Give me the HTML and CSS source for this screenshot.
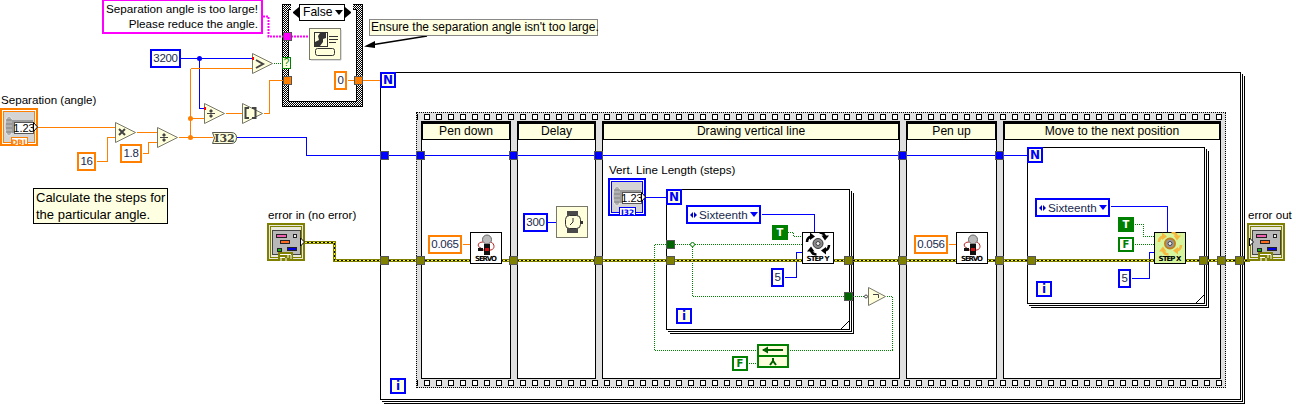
FILE: index.html
```html
<!DOCTYPE html>
<html lang="en">
<head>
    <meta charset="UTF-8">
    <meta name="viewport" content="width=device-width, initial-scale=1.0">
    <title>Block diagram</title>
    <link rel="stylesheet" href="styles.css">
</head>
<body>
<div class="canvas">

    <!-- structures, back to front -->
    <div class="loop loop-outer"></div>
    <div class="sequence">
        <svg class="film" width="808" height="8"><rect width="808" height="8" fill="url(#holes)"/></svg>
        <div class="frames">
            <div class="frame frame-1"><div class="frame-title">Pen down</div></div>
            <div class="frame frame-2"><div class="frame-title">Delay</div></div>
            <div class="frame frame-3"><div class="frame-title">Drawing vertical line</div></div>
            <div class="frame frame-4"><div class="frame-title">Pen up</div></div>
            <div class="frame frame-5"><div class="frame-title">Move to the next position</div></div>
        </div>
        <svg class="film" width="808" height="8"><rect width="808" height="8" fill="url(#holes)"/></svg>
    </div>
    <div class="loop loop-vert"></div>
    <div class="loop loop-move"></div>
    <div class="case-frame"><div class="case-body"></div></div>

    <!-- wires and icons -->
    <svg class="wires" width="1296" height="404">
        <defs>
            <pattern id="holes" x="2" width="12" height="8" patternUnits="userSpaceOnUse">
                <rect x="5.5" y="1.5" width="5" height="5" fill="#fff" stroke="#000"/>
            </pattern>
            <symbol id="tri" viewBox="0 0 21 21">
                <polygon points="0.5,0.5 20.5,10.5 0.5,20.5" fill="#ffffdc" stroke="#77776a"/>
            </symbol>
            <symbol id="servo" viewBox="0 0 32 32">
                <rect x="0.5" y="0.5" width="31" height="31" fill="#fff" stroke="#000"/>
                <circle cx="17" cy="7.500" r="4.500" fill="#bbb" stroke="#666"/>
                <path d="M13 10 C7 10 7 15 11 16 M21 10 C25 12 25 17 21 18 M11 18 H21" fill="none" stroke="#c02020"/>
                <rect x="14" y="12" width="6" height="11" fill="#111"/>
                <rect x="15" y="16" width="4" height="3" fill="#d01010"/>
                <rect x="8" y="16" width="5" height="3" fill="#111"/>
                <text x="16" y="29" class="icon-text" textLength="22">SERVO</text>
            </symbol>
            <symbol id="rotor" viewBox="0 0 32 24">
                <g id="rotor-arrow">
                    <path d="M5 10 C5 7 6 5.500 9 4.500" fill="none" stroke="currentColor" stroke-width="2.500"/>
                    <polygon points="8,0.500 13,4.500 8,8" fill="currentColor"/>
                </g>
                <use href="#rotor-arrow" transform="rotate(90 16 11.500)"/>
                <use href="#rotor-arrow" transform="rotate(180 16 11.500)"/>
                <use href="#rotor-arrow" transform="rotate(270 16 11.500)"/>
            </symbol>
            <symbol id="error" viewBox="0 0 38 38">
                <rect x="1" y="1" width="36" height="36" fill="#e8e8dc" stroke="#808000" stroke-width="2"/>
                <rect x="3.500" y="3.500" width="31" height="31" fill="#e8e8dc" stroke="#808000"/>
                <rect x="5.500" y="7.500" width="28" height="24" fill="#b8b8b8" stroke="#444"/>
                <rect x="9.500" y="11.500" width="10" height="3" fill="#f060b0" stroke="#222"/>
                <rect x="26.500" y="11.500" width="3" height="3" fill="#eee" stroke="#222"/>
                <rect x="13.500" y="17.500" width="9" height="3" fill="#ff6a20" stroke="#222"/>
                <rect x="10.500" y="25.500" width="4" height="3" fill="#10b010" stroke="#222"/>
                <rect x="20.500" y="24.500" width="9" height="3" fill="#0000e0" stroke="#222"/>
                <rect x="11" y="29" width="15" height="9" fill="#808000"/>
                <path d="M13 31.500 H24 M13 34.500 H18 M21 31 V35 M14 35 V38 M19 35 V38 M24 32 V36" stroke="#fff" fill="none"/>
            </symbol>
            <symbol id="numeric" viewBox="0 0 38 38">
                <rect x="1" y="1" width="36" height="36" fill="#d4d4d4" stroke="currentColor" stroke-width="2"/>
                <rect x="2.500" y="2.500" width="33" height="33" fill="none" stroke="#fff"/>
                <rect x="3.500" y="3.500" width="31" height="31" fill="#d4d4d4" stroke="currentColor"/>
                <ellipse cx="9" cy="18" rx="4" ry="10" fill="#b0b0b0" stroke="#e8e8e8"/>
                <path d="M6 12 H12 M6 16 H12 M6 20 H12 M6 24 H12" stroke="#808080"/>
                <rect x="12" y="12" width="21" height="13" fill="#9a9a9a"/>
                <rect x="14.500" y="14.500" width="19" height="11" fill="#fff" stroke="#555"/>
                <rect x="11.500" y="29.500" width="16" height="8" fill="#fff" stroke="currentColor"/>
            </symbol>
            <symbol id="corner" viewBox="0 0 10 10">
                <polygon points="0.500,9.500 9.500,0.500 9.500,9.500" fill="#fff"/>
                <path d="M0.500 9.500 L9.500 0.500 M0.500 9.500 H10 M9.500 0.500 V10" stroke="#000" fill="none"/>
            </symbol>
        </defs>

        <g class="crisp" transform="translate(.5 .5)">
            <!-- blue -->
            <path class="wire-blue" d="M180 58 H252 M199 58 V108 H204"/>
            <path class="wire-blue" d="M236 137 H306 V155 H1027"/>
            <path class="wire-blue" d="M645 197 H666 M761 214 H814 V232 M784 277 H796 V252 H802"/>
            <path class="wire-blue" d="M547 222 H556 M1110 206 H1167 V232 M1131 278 H1149 V252 H1154"/>
            <!-- orange -->
            <path class="wire-orange" d="M37 127 H115 M96 161 H107 V137 H115 M136 132 H157 M142 153 H148 V142 H157"/>
            <path class="wire-orange" d="M178 137 H212 M190 68 H252 M190 68 V137 M190 118 H204 M225 113 H242 M263 113 H269 V80 H283"/>
            <path class="wire-orange" d="M347 80 H380 M462 244 H470 M948 244 H956"/>
            <!-- boolean -->
            <path class="wire-green" d="M273 63 H282 M787 232 H793 V236 H802 M654 244 H802 M692 244 V296 H866"/>
            <path class="wire-green" d="M654 244 V350 H757 M789 350 H892 V296 H885 M748 363 H757"/>
            <path class="wire-green" d="M1134 224 H1143 V236 H1154 M1134 244 H1154"/>
        </g>
        <!-- string -->
        <path class="wire-pink" d="M263 16.500 H268.500 V36.500 H309"/>
        <!-- error cluster -->
        <path class="wire-error-base" d="M303 242.500 H334.500 V260.500 H1250"/>
        <path class="wire-error" d="M303 242.500 H334.500 V260.500 H1250"/>
        <path class="wire-error-dash" d="M303 242.500 H334.500 V260.500 H1250"/>
        <path class="note-arrow" d="M374 44.500 L427 36"/>
        <polygon points="364,46.500 375,41 375,48" fill="#000"/>

        <!-- primitives -->
        <use href="#tri" x="252" y="53" width="21" height="21"/>
        <use href="#tri" x="115" y="122" width="21" height="21"/>
        <use href="#tri" x="157" y="127" width="21" height="21"/>
        <use href="#tri" x="204" y="103" width="21" height="21"/>
        <use href="#tri" x="242" y="103" width="21" height="21"/>
        <polygon points="868.500,287.500 885.500,296.500 868.500,305.500" fill="#ffffdc" stroke="#77776a"/>
        <circle cx="866" cy="296.500" r="1.500" fill="#fff" stroke="#444"/>
        <g class="glyphs">
            <path d="M256 60 L263 64 L256 68" fill="none" stroke-width="2"/>
            <path d="M119 129 L125 135 M125 129 L119 135" fill="none" stroke-width="2"/>
            <path d="M160 137.500 H168 M163 134 h2 v2 h-2z M163 139 h2 v2 h-2z" fill="#444"/>
            <path d="M207 113.500 H215 M210 110 h2 v2 h-2z M210 115 h2 v2 h-2z" fill="#444"/>
            <path d="M249 108 H245.500 V118 H249 M252 108 H255.500 V118 H252" fill="none" stroke-width="2"/>
            <path d="M873 294.500 H878.500 V298" fill="none"/>
        </g>
        <path class="red" d="M252 57 h2 v3 h-2z M204 107 h2 v3 h-2z M380 79 h2 v3 h-2z"/>

        <!-- conversion -->
        <path d="M212.500 132.500 H231 Q236.500 132.500 236.500 137.500 Q236.500 143.500 231 143.500 H212.500 L214.500 138 Z" fill="#ffffdc" stroke="#55554a"/>
        <text x="224.500" y="142" class="i32">I32</text>

        <!-- message dialog -->
        <rect x="309.500" y="28.500" width="31" height="31" fill="#ffffdc" stroke="#77776a"/>
        <path d="M341 30 V60 H311" stroke="#bbb" fill="none"/>
        <rect x="314.500" y="32.500" width="13" height="14" fill="#ffffdc" stroke="#333"/>
        <path d="M320 33 h6 v5 l-3 1 v3 l-3 4 h-5 v-4 l4 -2 l-1 -4z" fill="#333"/>
        <path d="M329 36.500 H338 M329 39.500 H338 M329 42.500 H336" stroke="#333"/>
        <rect x="315.500" y="48.500" width="19" height="7" rx="2" fill="#ffffdc" stroke="#333"/>

        <!-- watch -->
        <rect x="556.500" y="206.500" width="31" height="31" fill="#ffffdc" stroke="#77776a"/>
        <path d="M567 211 h11 v5 h-11z M567 228 h11 v5 h-11z" fill="#4a4a4a"/>
        <rect x="565.500" y="215.500" width="15" height="13" rx="4" fill="#ffffdc" stroke="#333"/>
        <path d="M573 218 V222 L570 225" stroke="#333" fill="none"/>
        <path d="M581 221 h2 v3 h-2z" fill="#333"/>

        <!-- controls -->
        <use href="#numeric" x="0" y="108" width="38" height="38" class="ctl-orange"/>
        <use href="#numeric" x="608" y="178" width="38" height="38" class="ctl-blue"/>
        <text x="24" y="131.500" class="digits">1.23</text>
        <text x="632" y="201.500" class="digits">1.23</text>
        <text x="19.500" y="144.500" class="tab-text tab-orange">DBL</text>
        <text x="627.500" y="214.500" class="tab-text tab-blue">I32</text>
        <polygon points="33.500,122.500 37.500,127 33.500,131.500" fill="#fff" stroke="#000"/>
        <polygon points="641.500,192.500 645.500,197 641.500,201.500" fill="#fff" stroke="#000"/>
        <use href="#error" x="267" y="223" width="38" height="38"/>
        <polygon points="300.500,238 304.500,242 300.500,246" fill="#fff" stroke="#000"/>
        <use href="#error" x="1247" y="223" width="38" height="38"/>
        <polygon points="1249.500,238 1253.500,242 1249.500,246" fill="#fff" stroke="#000"/>

        <!-- sub VIs -->
        <use href="#servo" x="470" y="232" width="32" height="32"/>
        <use href="#servo" x="956" y="232" width="32" height="32"/>
        <rect x="802.500" y="232.500" width="31" height="31" fill="#fff" stroke="#000"/>
        <use href="#rotor" x="802" y="232" width="32" height="24" class="rotor-black"/>
        <circle cx="818" cy="243.500" r="5" fill="#8a8a8a" stroke="#333"/>
        <circle cx="818" cy="243.500" r="2" fill="#eee" stroke="#444"/>
        <text x="818" y="261" class="icon-text" textLength="23">STEP Y</text>
        <rect x="1154.500" y="232.500" width="31" height="31" fill="#d6f59c" stroke="#000"/>
        <use href="#rotor" x="1154" y="232" width="32" height="24" class="rotor-orange"/>
        <circle cx="1170" cy="243.500" r="5" fill="#999" stroke="#c08020" stroke-width="2"/>
        <circle cx="1170" cy="243.500" r="2" fill="#eee" stroke="#444"/>
        <text x="1170" y="261" class="icon-text" textLength="23">STEP X</text>

        <!-- feedback node -->
        <rect x="758" y="345" width="30" height="22" fill="#ffffdc" stroke="#008000" stroke-width="2"/>
        <path d="M758 356 H788" stroke="#008000" stroke-width="2"/>
        <path d="M763 350 H783" stroke="#006000" stroke-width="2"/>
        <polygon points="762,350 768,346.500 768,353.500" fill="#006000"/>
        <path d="M773 358 V361 M770 365 L773 361 L776 365" stroke="#006000" stroke-width="2" fill="none"/>

        <!-- tunnels -->
        <g class="tunnels">
            <rect class="t-pink" x="283.500" y="32.500" width="8" height="8"/>
            <rect class="t-orange" x="283.500" y="76.500" width="8" height="8"/>
            <rect class="t-orange" x="354.500" y="76.500" width="8" height="8"/>
            <rect class="t-blue" x="380.500" y="151.500" width="8" height="8"/>
            <rect class="t-blue" x="416.500" y="151.500" width="8" height="8"/>
            <rect class="t-blue" x="509.500" y="151.500" width="8" height="8"/>
            <rect class="t-blue" x="594.500" y="151.500" width="8" height="8"/>
            <rect class="t-blue" x="898.500" y="151.500" width="8" height="8"/>
            <rect class="t-blue" x="995.500" y="151.500" width="8" height="8"/>
            <rect class="t-err" x="380.500" y="256.500" width="8" height="8"/>
            <rect class="t-err" x="416.500" y="256.500" width="8" height="8"/>
            <rect class="t-err" x="509.500" y="256.500" width="8" height="8"/>
            <rect class="t-err" x="594.500" y="256.500" width="8" height="8"/>
            <rect class="t-err" x="666.500" y="256.500" width="8" height="8"/>
            <rect class="t-err" x="844.500" y="256.500" width="8" height="8"/>
            <rect class="t-err" x="898.500" y="256.500" width="8" height="8"/>
            <rect class="t-err" x="995.500" y="256.500" width="8" height="8"/>
            <rect class="t-err" x="1027.500" y="256.500" width="8" height="8"/>
            <rect class="t-err" x="1199.500" y="256.500" width="8" height="8"/>
            <rect class="t-err" x="1217.500" y="256.500" width="8" height="8"/>
            <rect class="t-err" x="1235.500" y="256.500" width="8" height="8"/>
            <rect class="t-green" x="666.500" y="240.500" width="8" height="8"/>
            <rect class="t-green" x="844.500" y="292.500" width="8" height="8"/>
        </g>
        <circle cx="199.500" cy="58.500" r="2.500" fill="#0000ff"/>
        <circle cx="190.500" cy="118.500" r="2.500" fill="#ff8000"/>
        <circle cx="190.500" cy="137.500" r="2.500" fill="#ff8000"/>
        <circle cx="692.500" cy="244.500" r="2" fill="#fff" stroke="#008000"/>

        <use href="#corner" x="840" y="320" width="10" height="10"/>
        <use href="#corner" x="1195" y="294" width="10" height="10"/>
    </svg>

    <!-- text nodes -->
    <div class="string-const">Separation angle is too large!<br>Please reduce the angle.</div>
    <div class="case-selector">
        <span class="sel-left"></span>
        <span class="sel-name">False<span class="sel-drop"></span></span>
        <span class="sel-right"></span>
    </div>
    <div class="select-term">?</div>
    <div class="note note-ensure">Ensure the separation angle isn't too large.</div>
    <div class="note note-calc">Calculate the steps for<br>the particular angle.</div>

    <div class="label label-separation">Separation (angle)</div>
    <div class="label label-errin">error in (no error)</div>
    <div class="label label-errout">error out</div>
    <div class="label label-length">Vert. Line Length (steps)</div>

    <div class="const orange c-16">16</div>
    <div class="const orange c-18">1.8</div>
    <div class="const orange c-0">0</div>
    <div class="const orange c-065">0.065</div>
    <div class="const orange c-056">0.056</div>
    <div class="const blue c-3200">3200</div>
    <div class="const blue c-300">300</div>
    <div class="const blue c-5a">5</div>
    <div class="const blue c-5b">5</div>

    <div class="enum enum-vert"><span class="enum-arrows"></span><span>Sixteenth</span><span class="enum-drop"></span></div>
    <div class="enum enum-move"><span class="enum-arrows"></span><span>Sixteenth</span><span class="enum-drop"></span></div>

    <div class="bool bool-on b-t1">T</div>
    <div class="bool bool-on b-t2">T</div>
    <div class="bool bool-off b-f1">F</div>
    <div class="bool bool-off b-f2">F</div>

    <div class="term term-n n-outer">N</div>
    <div class="term term-n n-vert">N</div>
    <div class="term term-n n-move">N</div>
    <div class="term term-i i-outer">i</div>
    <div class="term term-i i-vert">i</div>
    <div class="term term-i i-move">i</div>
</div>
</body>
</html>
```

FILE: styles.css
```css
body {
    margin: 0;
    background-color: #fff;
    font-family: "Liberation Sans", sans-serif;
    font-size: 12.1px;
    color: #000;
}

.canvas {
    position: relative;
    width: 1296px;
    height: 404px;
    overflow: hidden;
}

/* loops */
.loop {
    position: absolute;
    box-sizing: border-box;
    border: 1px solid #000;
    background-color: #fff;
    box-shadow: 1px 1px 0 0 #fff, 2px 2px 0 0 #000, 3px 3px 0 0 #fff, 4px 4px 0 0 #000;
}
.loop-outer { left: 380px; top: 72px; width: 861px; height: 328px; }
.loop-vert { left: 666px; top: 189px; width: 184px; height: 141px; }
.loop-move { left: 1027px; top: 147px; width: 178px; height: 157px; }

/* flat sequence */
.sequence {
    position: absolute;
    left: 416px;
    top: 112px;
    width: 810px;
    height: 276px;
    box-sizing: border-box;
    border: 1px dotted #000;
    background-color: #e0e0e0;
    display: flex;
    flex-direction: column;
}
.film { display: block; flex: none; }
.frames {
    flex: 1;
    display: flex;
    gap: 6px;
    padding: 0 4px;
}
.frame {
    box-sizing: border-box;
    border: 1px solid #000;
    background-color: #fff;
}
.frame-1 { width: 90px; }
.frame-2 { width: 79px; }
.frame-3 { width: 298px; }
.frame-4 { width: 91px; }
.frame-5 { width: 218px; }
.frame-title {
    box-sizing: border-box;
    height: 18px;
    margin: 0 -1px;
    border: 2px solid #000;
    border-bottom-width: 1px;
    background-color: #ffffe1;
    text-align: center;
    line-height: 15px;
}

/* case structure */
.case-frame {
    position: absolute;
    left: 282px;
    top: 4px;
    width: 81px;
    height: 103px;
    box-sizing: border-box;
    border: 1px solid #000;
    background: repeating-conic-gradient(#000 0 25%, #fff 0 50%) 0 0 / 2px 2px;
    padding: 4px 5px;
}
.case-body {
    height: 100%;
    box-sizing: border-box;
    border: 1px solid #000;
    background-color: #fff;
}
.case-selector {
    position: absolute;
    left: 291px;
    top: 4px;
    width: 62px;
    height: 17px;
    background-color: #fff;
    display: flex;
    align-items: stretch;
    line-height: 15px;
}
.sel-left, .sel-right {
    width: 8px;
    border-top: 5px solid transparent;
    border-bottom: 5px solid transparent;
    margin: 3px 0;
    box-sizing: border-box;
}
.sel-left { border-right: 6px solid #000; }
.sel-right { border-left: 6px solid #000; }
.sel-name {
    flex: 1;
    box-sizing: border-box;
    border: 1px solid #000;
    padding-left: 3px;
    display: flex;
    justify-content: space-between;
    align-items: center;
}
.sel-drop {
    margin-right: 1px;
    border-top: 5px solid #000;
    border-left: 4px solid transparent;
    border-right: 4px solid transparent;
}

/* wires */
.wires { position: absolute; left: 0; top: 0; }
.crisp { shape-rendering: crispEdges; }
.wire-blue { stroke: #0000ff; fill: none; }
.wire-orange { stroke: #ff8000; fill: none; }
.wire-green { stroke: #008000; stroke-dasharray: 1 1; fill: none; }
.wire-pink { stroke: #ff00ff; stroke-width: 2; stroke-dasharray: 2 1; fill: none; }
.wire-error-base { stroke: #808000; stroke-width: 3; fill: none; }
.wire-error { stroke: #ffff00; stroke-width: 1; fill: none; }
.wire-error-dash { stroke: #000; stroke-width: 1; stroke-dasharray: 2 2; fill: none; }
.note-arrow { stroke: #000; stroke-width: 1.5; fill: none; }
.glyphs path { stroke: #444; }
.red { fill: #f00; }

/* svg bits */
.icon-text {
    font: bold 7px "DejaVu Sans", sans-serif;
    text-anchor: middle;
}
.i32 {
    font: bold 11px "DejaVu Serif", serif;
    text-anchor: middle;
    fill: #44443a;
}
.digits {
    font-size: 11px;
    text-anchor: middle;
}
.tab-text {
    font: bold 7.5px "DejaVu Sans", sans-serif;
    text-anchor: middle;
}
.tab-orange { fill: #ff8000; }
.tab-blue { fill: #0000ff; }
.ctl-orange { color: #ff8000; }
.ctl-blue { color: #0000ff; }
.rotor-black { color: #000; }
.rotor-orange { color: #f8b840; }
.tunnels rect { stroke: #555; }
.t-pink { fill: #ff00ff; }
.t-orange { fill: #ff8000; }
.t-blue { fill: #0000ff; }
.t-err { fill: #808000; }
.t-green { fill: #006400; }

/* text on the diagram */
.string-const {
    position: absolute;
    left: 102px;
    top: -1px;
    width: 161px;
    height: 35px;
    box-sizing: border-box;
    border: 2px solid #ff00ff;
    background-color: #fff;
    text-align: right;
    font-size: 11.7px;
    padding-right: 3px;
    line-height: 15px;
    white-space: nowrap;
}
.select-term {
    position: absolute;
    left: 282px;
    top: 57px;
    width: 9px;
    height: 12px;
    box-sizing: border-box;
    border: 1px solid #008000;
    background-color: #ffffe1;
    color: #008000;
    font-size: 10px;
    line-height: 10px;
    text-align: center;
}
.note {
    position: absolute;
    box-sizing: border-box;
    border: 1px solid #000;
    background-color: #ffffe1;
    padding: 0 1px;
    white-space: nowrap;
}
.note-ensure { left: 369px; top: 19px; width: 229px; height: 17px; font-size: 12px; line-height: 15px; border-color: #888; }
.note-calc { left: 33px; top: 188px; width: 135px; height: 36px; padding: 0 2px; font-size: 13px; line-height: 17px; }

.label { position: absolute; font-size: 11.6px; line-height: 15px; white-space: nowrap; }
.label-separation { left: 1px; top: 92px; }
.label-errin { left: 268px; top: 207px; }
.label-errout { left: 1248px; top: 207px; }
.label-length { left: 609px; top: 162px; }

.const {
    position: absolute;
    box-sizing: border-box;
    border-width: 2px;
    border-style: solid;
    background-color: #fff;
    color: #1a2a50;
    text-align: center;
    font-size: 11.5px;
    letter-spacing: -0.3px;
    line-height: 15px;
}
.const.orange { border-color: #ff8000; }
.const.blue { border-color: #0000ff; }
.c-16 { left: 77px; top: 152px; width: 19px; height: 19px; }
.c-18 { left: 120px; top: 144px; width: 22px; height: 19px; }
.c-0 { left: 334px; top: 71px; width: 13px; height: 19px; }
.c-065 { left: 428px; top: 235px; width: 34px; height: 19px; }
.c-056 { left: 914px; top: 235px; width: 34px; height: 19px; }
.c-3200 { left: 150px; top: 49px; width: 31px; height: 19px; }
.c-300 { left: 523px; top: 213px; width: 25px; height: 19px; }
.c-5a { left: 771px; top: 268px; width: 13px; height: 19px; }
.c-5b { left: 1118px; top: 269px; width: 13px; height: 19px; }

.enum {
    position: absolute;
    box-sizing: border-box;
    width: 75px;
    height: 19px;
    border: 2px solid #0000ff;
    background-color: #fff;
    color: #1a2a50;
    display: flex;
    align-items: center;
    gap: 2px;
    padding: 0 2px;
    font-size: 11.7px;
    line-height: 15px;
}
.enum-vert { left: 686px; top: 205px; }
.enum-move { left: 1035px; top: 198px; }
.enum-arrows { display: flex; gap: 1px; }
.enum-arrows::before {
    content: "";
    border-top: 3px solid transparent;
    border-bottom: 3px solid transparent;
    border-right: 3px solid #0000c0;
}
.enum-arrows::after {
    content: "";
    border-top: 3px solid transparent;
    border-bottom: 3px solid transparent;
    border-left: 3px solid #0000c0;
}
.enum-drop {
    margin-left: auto;
    margin-right: 2px;
    border-top: 5px solid #0000ff;
    border-left: 4px solid transparent;
    border-right: 4px solid transparent;
}

.bool {
    position: absolute;
    box-sizing: border-box;
    width: 16px;
    height: 15px;
    border: 2px solid #008000;
    font: bold 10px "DejaVu Sans", sans-serif;
    line-height: 11px;
    text-align: center;
}
.bool-on { background-color: #008000; color: #fff; }
.bool-off { background-color: #fff; color: #008000; }
.b-t1 { left: 772px; top: 225px; }
.b-t2 { left: 1118px; top: 217px; }
.b-f1 { left: 732px; top: 356px; }
.b-f2 { left: 1118px; top: 237px; }

.term {
    position: absolute;
    box-sizing: border-box;
    width: 16px;
    height: 16px;
    border: 2px solid #0000ff;
    background-color: #ffffe1;
    color: #0000ff;
    font: bold 12px "DejaVu Sans", sans-serif;
    line-height: 12px;
    text-align: center;
}
.n-outer { left: 380px; top: 72px; }
.n-vert { left: 666px; top: 189px; }
.n-move { left: 1027px; top: 147px; }
.i-outer { left: 390px; top: 378px; }
.i-vert { left: 676px; top: 308px; }
.i-move { left: 1036px; top: 281px; }
```
